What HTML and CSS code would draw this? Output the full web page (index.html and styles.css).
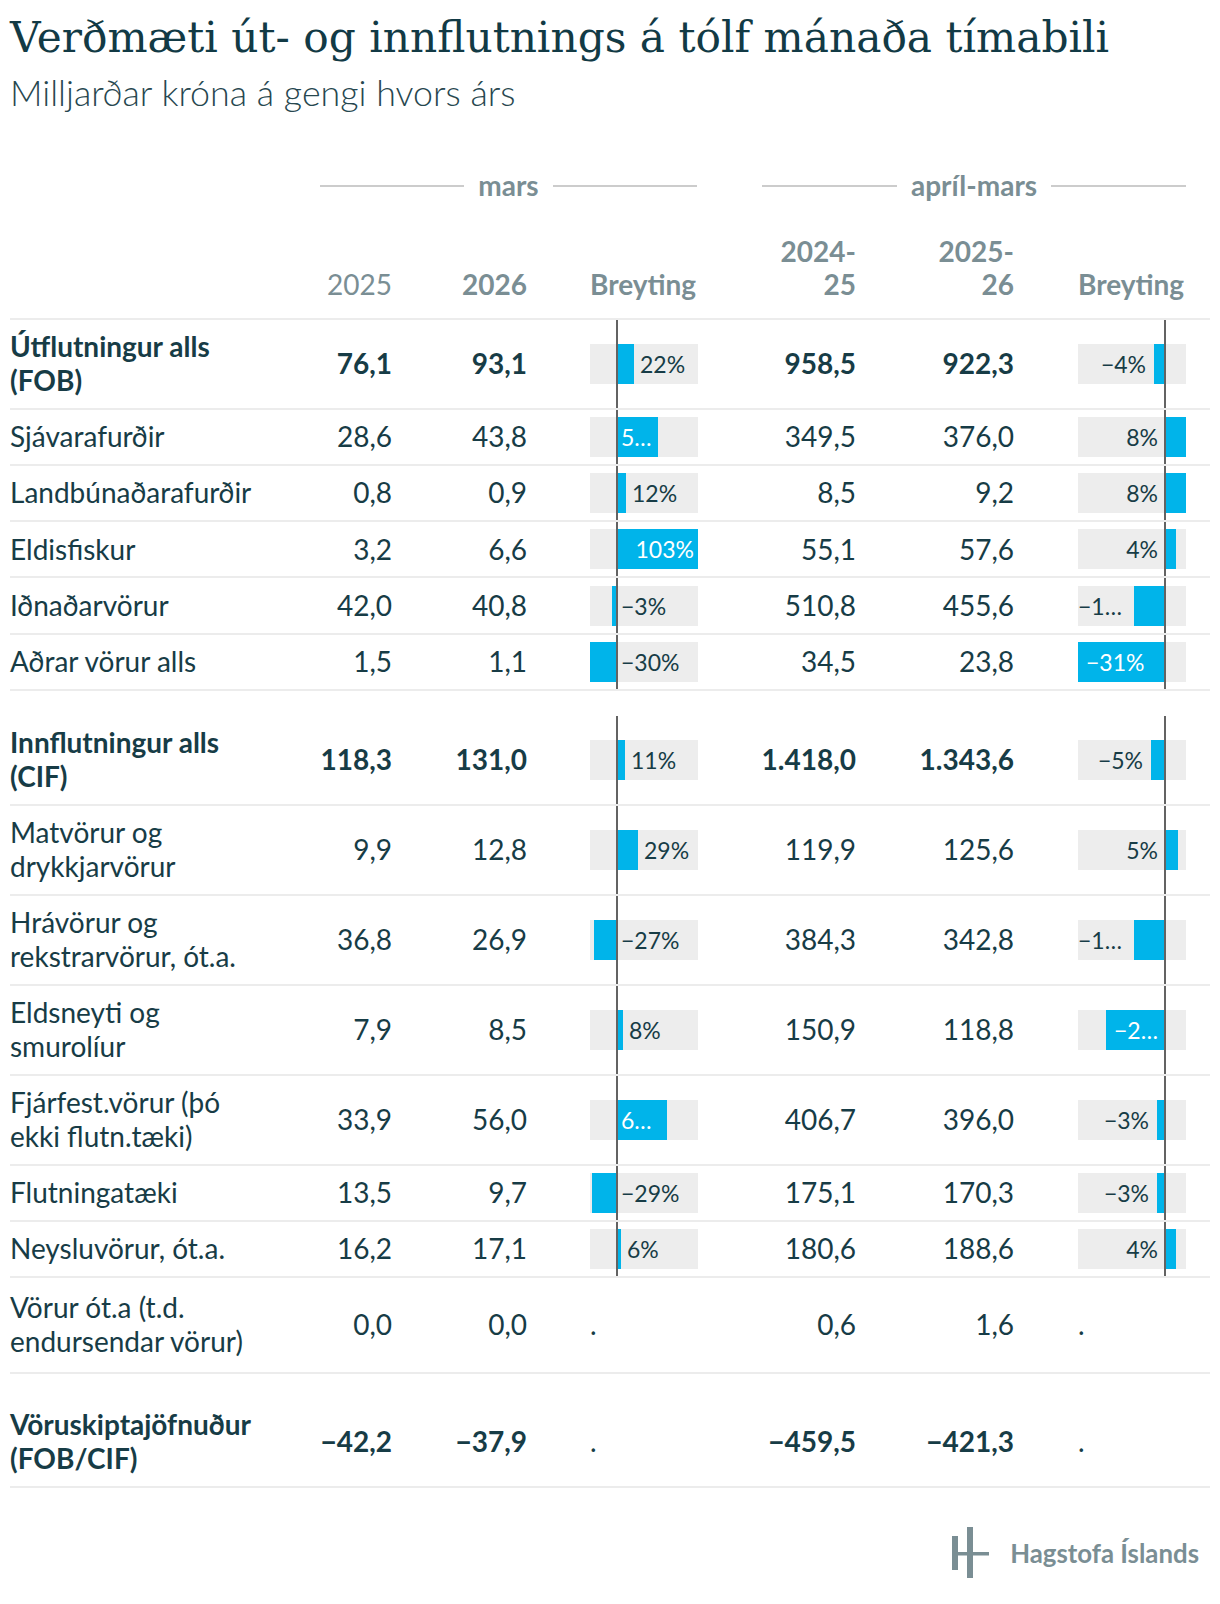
FILE: index.html
```html
<!DOCTYPE html>
<html lang="is">
<head>
<meta charset="utf-8">
<title>Verðmæti út- og innflutnings</title>
<link rel="stylesheet" href="styles.css">
</head>
<body>
<div class="page">
  <h1 class="title">Verðmæti út- og innflutnings á tólf mánaða tímabili</h1>
  <p class="subtitle">Milljarðar króna á gengi hvors árs</p>

  <div class="table">
    <div class="spanners">
      <div class="spanner sp-mars"><span>mars</span></div>
      <div class="spanner sp-apr"><span>apríl-mars</span></div>
    </div>

    <div class="row head">
      <div class="cell"></div>
      <div class="cell num light">2025</div>
      <div class="cell num">2026</div>
      <div class="cell bar1">Breyting</div>
      <div class="cell num">2024-<br>25</div>
      <div class="cell num">2025-<br>26</div>
      <div class="cell bar2">Breyting</div>
      <div class="cell"></div>
    </div>

    <!-- Útflutningur -->
    <div class="row bold">
      <div class="cell label">Útflutningur alls (FOB)</div>
      <div class="cell num">76,1</div>
      <div class="cell num">93,1</div>
      <div class="cell bar1 axis"><div class="box b1"><div class="neg"></div><div class="pos"><div class="bar" style="width:17px"></div><span class="lbl">22%</span></div></div></div>
      <div class="cell num">958,5</div>
      <div class="cell num">922,3</div>
      <div class="cell bar2 axis"><div class="box b2"><div class="neg"><span class="lbl">−4%</span><div class="bar" style="width:11px"></div></div><div class="pos"></div></div></div>
      <div class="cell"></div>
    </div>

    <div class="row">
      <div class="cell label">Sjávarafurðir</div>
      <div class="cell num">28,6</div>
      <div class="cell num">43,8</div>
      <div class="cell bar1 axis"><div class="box b1"><div class="neg"></div><div class="pos"><div class="bar in" style="width:41px">53%</div></div></div></div>
      <div class="cell num">349,5</div>
      <div class="cell num">376,0</div>
      <div class="cell bar2 axis"><div class="box b2"><div class="neg"><span class="lbl pl">8%</span></div><div class="pos"><div class="bar" style="width:21px"></div></div></div></div>
      <div class="cell"></div>
    </div>

    <div class="row">
      <div class="cell label">Landbúnaðarafurðir</div>
      <div class="cell num">0,8</div>
      <div class="cell num">0,9</div>
      <div class="cell bar1 axis"><div class="box b1"><div class="neg"></div><div class="pos"><div class="bar" style="width:9px"></div><span class="lbl">12%</span></div></div></div>
      <div class="cell num">8,5</div>
      <div class="cell num">9,2</div>
      <div class="cell bar2 axis"><div class="box b2"><div class="neg"><span class="lbl pl">8%</span></div><div class="pos"><div class="bar" style="width:21px"></div></div></div></div>
      <div class="cell"></div>
    </div>

    <div class="row">
      <div class="cell label">Eldisfiskur</div>
      <div class="cell num">3,2</div>
      <div class="cell num">6,6</div>
      <div class="cell bar1 axis"><div class="box b1"><div class="neg"></div><div class="pos"><div class="bar in" style="width:81px">103%</div></div></div></div>
      <div class="cell num">55,1</div>
      <div class="cell num">57,6</div>
      <div class="cell bar2 axis"><div class="box b2"><div class="neg"><span class="lbl pl">4%</span></div><div class="pos"><div class="bar" style="width:11px"></div></div></div></div>
      <div class="cell"></div>
    </div>

    <div class="row">
      <div class="cell label">Iðnaðarvörur</div>
      <div class="cell num">42,0</div>
      <div class="cell num">40,8</div>
      <div class="cell bar1 axis"><div class="box b1"><div class="neg"><div class="bar" style="width:5px"></div></div><div class="pos"><span class="lbl nl">−3%</span></div></div></div>
      <div class="cell num">510,8</div>
      <div class="cell num">455,6</div>
      <div class="cell bar2 axis"><div class="box b2"><div class="neg"><span class="lbl">−11%</span><div class="bar" style="width:31px"></div></div><div class="pos"></div></div></div>
      <div class="cell"></div>
    </div>

    <div class="row">
      <div class="cell label">Aðrar vörur alls</div>
      <div class="cell num">1,5</div>
      <div class="cell num">1,1</div>
      <div class="cell bar1 axis"><div class="box b1"><div class="neg"><div class="bar" style="width:27px"></div></div><div class="pos"><span class="lbl nl">−30%</span></div></div></div>
      <div class="cell num">34,5</div>
      <div class="cell num">23,8</div>
      <div class="cell bar2 axis"><div class="box b2"><div class="neg"><div class="bar in" style="width:87px">−31%</div></div><div class="pos"></div></div></div>
      <div class="cell"></div>
    </div>

    <div class="group-gap"></div>

    <!-- Innflutningur -->
    <div class="row bold">
      <div class="cell label">Innflutningur alls (CIF)</div>
      <div class="cell num">118,3</div>
      <div class="cell num">131,0</div>
      <div class="cell bar1 axis"><div class="box b1"><div class="neg"></div><div class="pos"><div class="bar" style="width:8px"></div><span class="lbl">11%</span></div></div></div>
      <div class="cell num">1.418,0</div>
      <div class="cell num">1.343,6</div>
      <div class="cell bar2 axis"><div class="box b2"><div class="neg"><span class="lbl">−5%</span><div class="bar" style="width:14px"></div></div><div class="pos"></div></div></div>
      <div class="cell"></div>
    </div>

    <div class="row">
      <div class="cell label">Matvörur og drykkjarvörur</div>
      <div class="cell num">9,9</div>
      <div class="cell num">12,8</div>
      <div class="cell bar1 axis"><div class="box b1"><div class="neg"></div><div class="pos"><div class="bar" style="width:21px"></div><span class="lbl">29%</span></div></div></div>
      <div class="cell num">119,9</div>
      <div class="cell num">125,6</div>
      <div class="cell bar2 axis"><div class="box b2"><div class="neg"><span class="lbl pl">5%</span></div><div class="pos"><div class="bar" style="width:13px"></div></div></div></div>
      <div class="cell"></div>
    </div>

    <div class="row">
      <div class="cell label">Hrávörur og rekstrarvörur, ót.a.</div>
      <div class="cell num">36,8</div>
      <div class="cell num">26,9</div>
      <div class="cell bar1 axis"><div class="box b1"><div class="neg"><div class="bar" style="width:23px"></div></div><div class="pos"><span class="lbl nl">−27%</span></div></div></div>
      <div class="cell num">384,3</div>
      <div class="cell num">342,8</div>
      <div class="cell bar2 axis"><div class="box b2"><div class="neg"><span class="lbl">−11%</span><div class="bar" style="width:31px"></div></div><div class="pos"></div></div></div>
      <div class="cell"></div>
    </div>

    <div class="row">
      <div class="cell label">Eldsneyti og smurolíur</div>
      <div class="cell num">7,9</div>
      <div class="cell num">8,5</div>
      <div class="cell bar1 axis"><div class="box b1"><div class="neg"></div><div class="pos"><div class="bar" style="width:6px"></div><span class="lbl">8%</span></div></div></div>
      <div class="cell num">150,9</div>
      <div class="cell num">118,8</div>
      <div class="cell bar2 axis"><div class="box b2"><div class="neg"><div class="bar in" style="width:59px">−21%</div></div><div class="pos"></div></div></div>
      <div class="cell"></div>
    </div>

    <div class="row">
      <div class="cell label">Fjárfest.vörur (þó ekki flutn.tæki)</div>
      <div class="cell num">33,9</div>
      <div class="cell num">56,0</div>
      <div class="cell bar1 axis"><div class="box b1"><div class="neg"></div><div class="pos"><div class="bar in" style="width:50px">65%</div></div></div></div>
      <div class="cell num">406,7</div>
      <div class="cell num">396,0</div>
      <div class="cell bar2 axis"><div class="box b2"><div class="neg"><span class="lbl">−3%</span><div class="bar" style="width:8px"></div></div><div class="pos"></div></div></div>
      <div class="cell"></div>
    </div>

    <div class="row">
      <div class="cell label">Flutningatæki</div>
      <div class="cell num">13,5</div>
      <div class="cell num">9,7</div>
      <div class="cell bar1 axis"><div class="box b1"><div class="neg"><div class="bar" style="width:25px"></div></div><div class="pos"><span class="lbl nl">−29%</span></div></div></div>
      <div class="cell num">175,1</div>
      <div class="cell num">170,3</div>
      <div class="cell bar2 axis"><div class="box b2"><div class="neg"><span class="lbl">−3%</span><div class="bar" style="width:8px"></div></div><div class="pos"></div></div></div>
      <div class="cell"></div>
    </div>

    <div class="row">
      <div class="cell label">Neysluvörur, ót.a.</div>
      <div class="cell num">16,2</div>
      <div class="cell num">17,1</div>
      <div class="cell bar1 axis"><div class="box b1"><div class="neg"></div><div class="pos"><div class="bar" style="width:4px"></div><span class="lbl">6%</span></div></div></div>
      <div class="cell num">180,6</div>
      <div class="cell num">188,6</div>
      <div class="cell bar2 axis"><div class="box b2"><div class="neg"><span class="lbl pl">4%</span></div><div class="pos"><div class="bar" style="width:11px"></div></div></div></div>
      <div class="cell"></div>
    </div>

    <div class="row tall">
      <div class="cell label">Vörur ót.a (t.d. endursendar vörur)</div>
      <div class="cell num">0,0</div>
      <div class="cell num">0,0</div>
      <div class="cell bar1">.</div>
      <div class="cell num">0,6</div>
      <div class="cell num">1,6</div>
      <div class="cell bar2">.</div>
      <div class="cell"></div>
    </div>

    <div class="group-gap last"></div>

    <div class="row bold">
      <div class="cell label">Vöruskiptajöfnuður (FOB/CIF)</div>
      <div class="cell num">−42,2</div>
      <div class="cell num">−37,9</div>
      <div class="cell bar1">.</div>
      <div class="cell num">−459,5</div>
      <div class="cell num">−421,3</div>
      <div class="cell bar2">.</div>
      <div class="cell"></div>
    </div>
  </div>

  <div class="footer">
    <svg class="mark" width="38" height="52" viewBox="0 0 38 52" aria-hidden="true">
      <rect x="0" y="9" width="6" height="34" fill="#7a8e94"/>
      <rect x="15" y="0" width="6" height="51" fill="#7a8e94"/>
      <rect x="0" y="25" width="37" height="3.5" fill="#7a8e94"/>
    </svg>
    <span class="brand">Hagstofa Íslands</span>
  </div>
</div>
</body>
</html>
```

FILE: styles.css
```css
body {
  margin: 0;
  background: #ffffff;
  font-family: "Lato", "Noto Sans", sans-serif;
  color: #173c46;
}

.page {
  width: 1200px;
  padding: 0 10px;
}

.title {
  margin: 0;
  padding-top: 12px;
  font-family: "DejaVu Serif", "Liberation Serif", serif;
  font-weight: 400;
  font-size: 42.3px;
  line-height: 52px;
  color: #123a45;
  white-space: nowrap;
}

.subtitle {
  margin: 9px 0 0;
  font-family: "Lato", sans-serif;
  font-weight: 300;
  font-size: 35.8px;
  line-height: 40px;
  color: #27474f;
}

.table {
  width: 1200px;
}

.spanners {
  display: flex;
  margin-top: 56px;
  height: 33px;
  align-items: center;
}

.spanner {
  display: flex;
  align-items: center;
  gap: 14px;
  color: #7a8e94;
  font-weight: 700;
  font-size: 28px;
  line-height: 33px;
}

.spanner::before,
.spanner::after {
  content: "";
  flex: 1;
  height: 2px;
  background: #cccccc;
}

.sp-mars {
  margin-left: 310px;
  width: 377px;
}

.sp-apr {
  margin-left: 65px;
  width: 424px;
}

.row {
  display: grid;
  grid-template-columns: 260px 122px 135px 171px 158px 158px 172px 24px;
  border-bottom: 2px solid #ececec;
}

.cell {
  display: flex;
  align-items: center;
  padding-top: 10.2px;
  padding-bottom: 10.2px;
  font-size: 28px;
  line-height: 33.8px;
  min-width: 0;
}

.label {
  display: block;
  align-self: center;
}

.num {
  justify-content: flex-end;
  text-align: right;
  font-variant-numeric: tabular-nums;
}

.bold .label,
.bold .num {
  font-weight: 700;
}

.head {
  margin-top: 33px;
}

.head .cell {
  align-items: flex-end;
  padding-top: 0;
  padding-bottom: 17px;
  line-height: 33px;
  color: #7a8e94;
  font-weight: 700;
}

.head .cell.light {
  font-weight: 400;
}

.bar1 {
  position: relative;
  padding-left: 63px;
}

.bar2 {
  position: relative;
  padding-left: 64px;
}

.bar1.axis::after,
.bar2.axis::after {
  content: "";
  position: absolute;
  top: 0;
  bottom: 0;
  width: 2px;
  background: #636363;
}

.bar1.axis::after {
  left: 89px;
}

.bar2.axis::after {
  left: 150px;
}

.row.tall .cell {
  padding-top: 13px;
  padding-bottom: 13px;
}

.group-gap {
  height: 25px;
}

.group-gap.last {
  height: 24px;
}

.box {
  display: flex;
  width: 108px;
  height: 40px;
  margin: -4px 0;
  background: #ededed;
  font-size: 23px;
  line-height: 40px;
  font-weight: 400;
  color: #173c46;
}

.b1 .neg {
  width: 27px;
  display: flex;
  justify-content: flex-end;
}

.b1 .pos {
  width: 81px;
  display: flex;
  min-width: 0;
}

.b2 .neg {
  width: 87px;
  display: flex;
  justify-content: flex-end;
  min-width: 0;
}

.b2 .pos {
  width: 21px;
  display: flex;
}

.bar {
  flex: none;
  height: 40px;
  background: #00b4ea;
  box-sizing: border-box;
}

.lbl {
  white-space: nowrap;
  overflow: hidden;
  text-overflow: ellipsis;
  min-width: 0;
}

.b1 .lbl {
  margin-left: 6px;
}

.b1 .lbl.nl {
  margin-left: 4px;
}

.b2 .lbl {
  margin-right: 8px;
}

.b2 .lbl.pl {
  margin-right: 7px;
}

.bar.in {
  color: #ffffff;
  white-space: nowrap;
  overflow: hidden;
  text-overflow: ellipsis;
}

.b1 .bar.in {
  padding: 0 4px;
  text-align: right;
}

.b2 .bar.in {
  padding: 0 4px 0 8px;
  text-align: left;
}

.footer {
  display: flex;
  justify-content: flex-end;
  align-items: center;
  gap: 20px;
  margin-top: 39px;
  padding-right: 11px;
}

.mark {
  display: block;
}

.brand {
  font-family: "Lato", sans-serif;
  font-weight: 700;
  font-size: 25.8px;
  line-height: 30px;
  color: #7a8e94;
}
```
